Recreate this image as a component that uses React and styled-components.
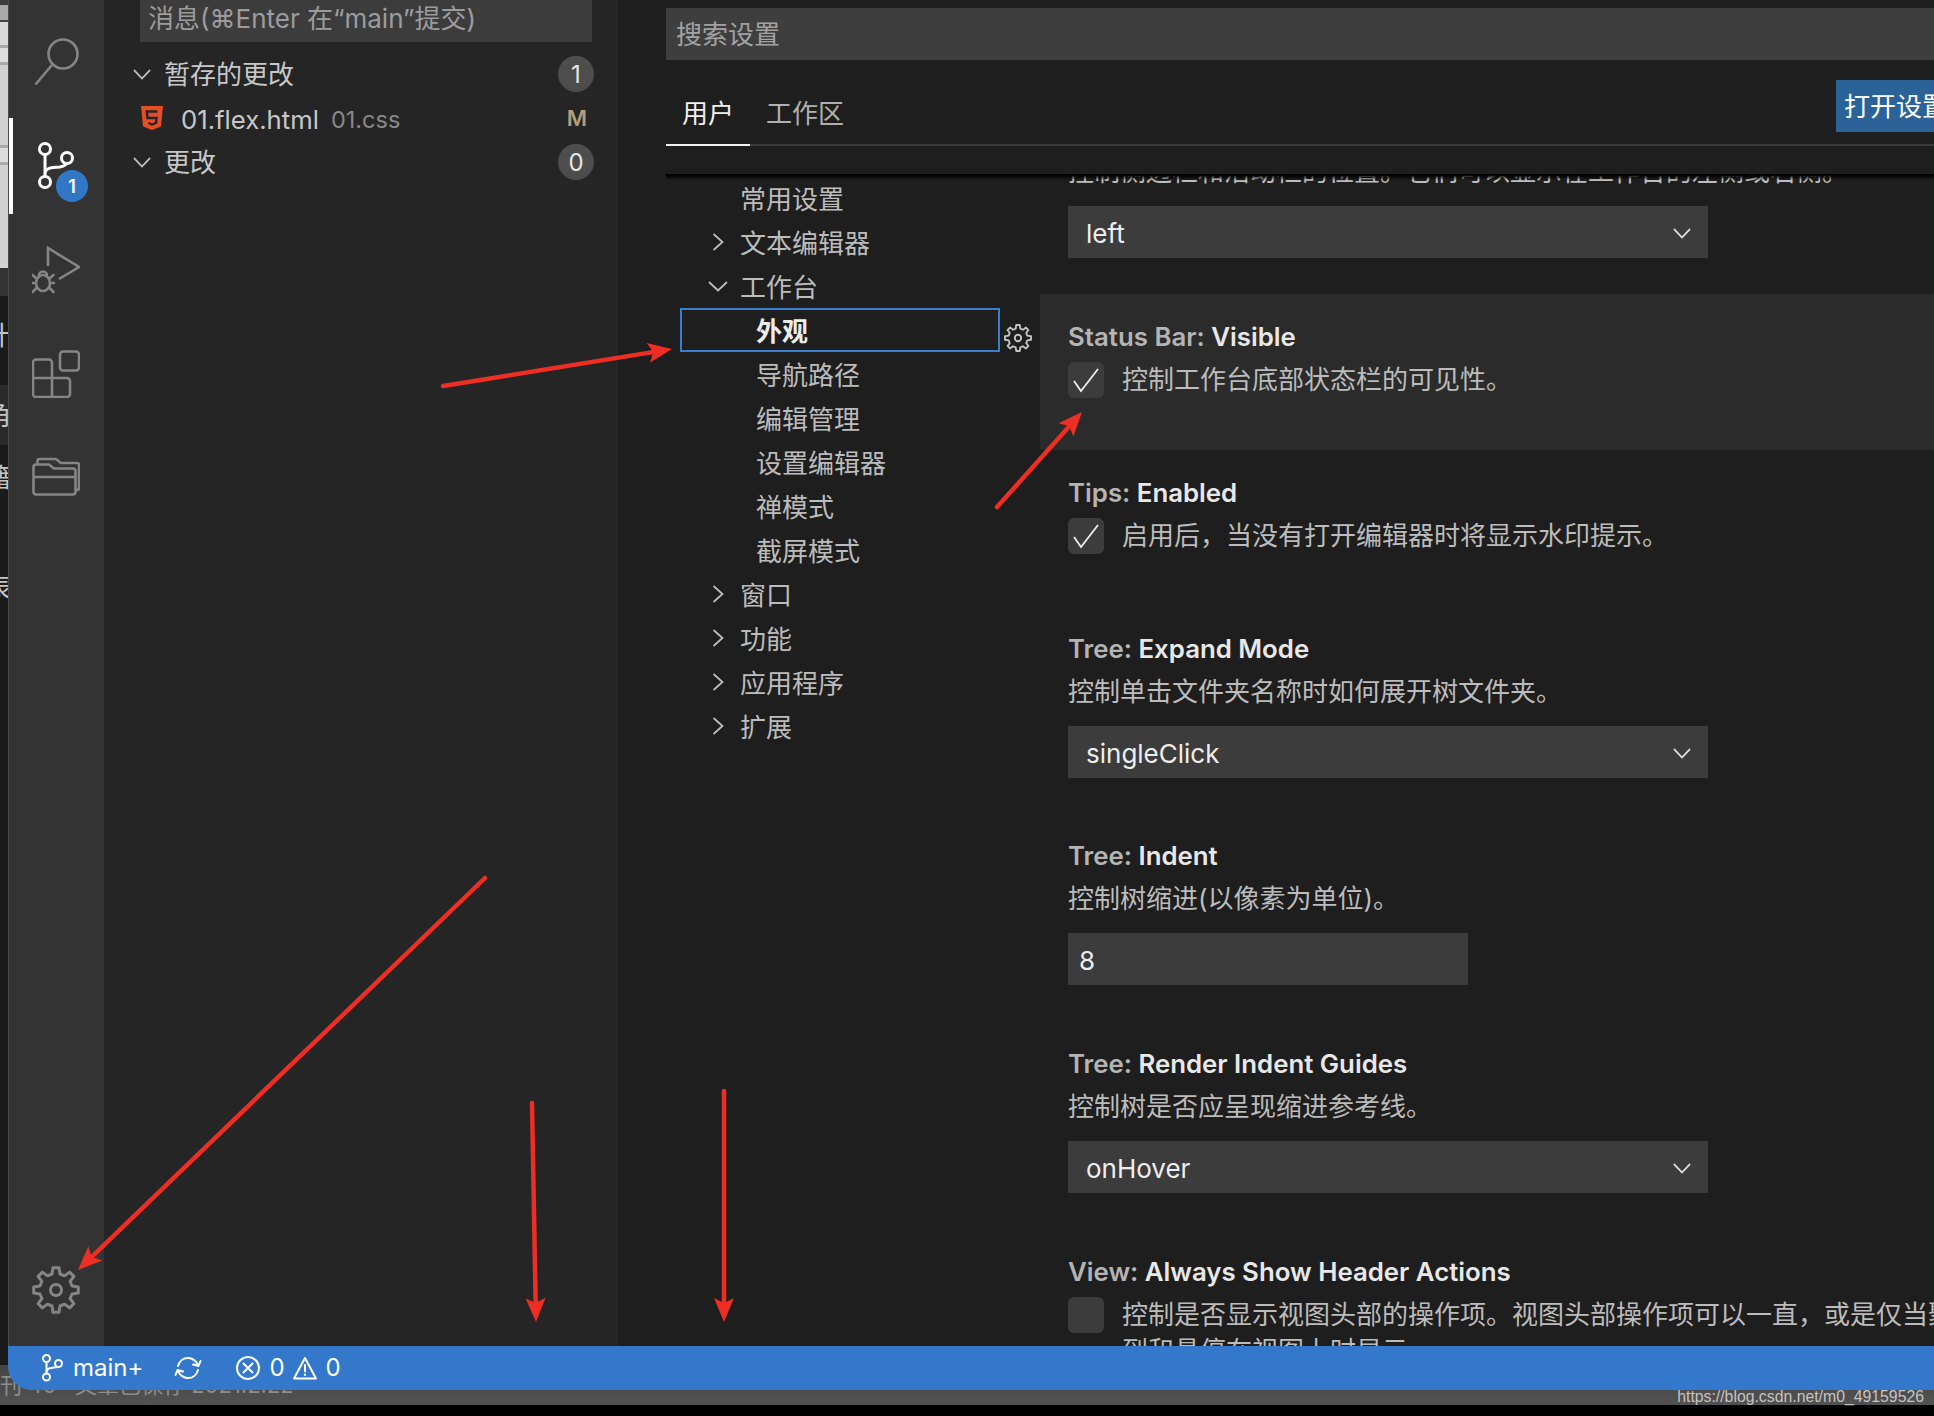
import React from "react";
import styled, { createGlobalStyle } from "styled-components";

const Global = createGlobalStyle`
  html, body { margin: 0; padding: 0; width: 1934px; height: 1416px; overflow: hidden; background: #000; }
  body { font-family: Inter, "Noto Sans CJK SC", sans-serif; }
  #root { width: 1934px; height: 1416px; }
`;

const Page = styled.div`
  position: relative; width: 1934px; height: 1416px; overflow: hidden;
  display: flex; flex-direction: column; background: #000;
`;
const Workspace = styled.div`display: flex; height: 1346px; flex: none;`;

const Strip = styled.div`width: 8px; flex: none; display: flex; flex-direction: column; overflow: hidden; border-right: 1px solid #4c4c4c; box-sizing: content-box;`;
const StripBand = styled.div`
  flex: none; height: ${p => p.$h}px; background: ${p => p.$bg}; position: relative; overflow: hidden;
`;
const StripGlyph = styled.span`
  position: absolute; left: -15px; top: ${p => p.$top}px; font-size: 26px; line-height: 26px; color: #c4c4c4;
`;

const ActivityBar = styled.nav`
  width: 95px; flex: none; background: #333; display: flex; flex-direction: column;
  padding: 10px 0 4px; box-sizing: border-box;
`;
const ActivityItem = styled.div`
  position: relative; height: 104px; flex: none; display: flex; align-items: center; justify-content: center;
  padding-right: 2px;
  ${p => p.$bottom && "margin-top: auto;"}
  ${p => p.$active && `&::before { content: ""; position: absolute; left: 0; top: 4px; bottom: 4px; width: 4px; background: #fff; }`}
`;
const ActivityBadge = styled.span`
  position: absolute; left: 47px; top: 56px; width: 32px; height: 32px; border-radius: 50%;
  background: #3277c6; color: #fff; font-size: 18px; font-weight: 600;
  display: flex; align-items: center; justify-content: center;
`;

const Sidebar = styled.aside`
  width: 514px; flex: none; background: #252525; padding: 0 24px 0 36px; box-sizing: border-box;
  color: #c8c8c8; font-size: 26px;
`;
const CommitInput = styled.div`
  height: 42px; width: 452px; background: #3c3c3c; color: #9c9c9c; padding-left: 8px; box-sizing: border-box;
  line-height: 38px; margin-bottom: 10px; white-space: nowrap; overflow: hidden; margin-right: -2px;
`;
const GroupRow = styled.div`
  height: 44px; display: flex; align-items: center; margin-left: -7px;
`;
const GroupChevron = styled.span`width: 18px; display: flex; margin-right: 13px;`;
const RowText = styled.span`flex: 1; white-space: nowrap; padding-bottom: 3px;`;
const CountBadge = styled.span`
  min-width: 36px; height: 36px; border-radius: 18px; background: #4d4d4d; color: #e6e6e6; font-size: 24px;
  display: flex; align-items: center; justify-content: center; box-sizing: border-box;
`;
const FileRow = styled.div`height: 44px; display: flex; align-items: center; padding-left: 1px;`;
const FileName = styled.span`font-size: 25.7px; color: #c8c8c8; margin-left: 18px; padding-top: 2px;`;
const FileDir = styled.span`font-size: 23.500px; color: #888; margin-left: 12px; flex: 1; padding-top: 2px;`;
const FileState = styled.span`font-size: 22px; font-weight: 600; color: #b39e7a; margin-right: 7px;`;

const Editor = styled.main`
  flex: 1; min-width: 0; background: #1e1e1e; display: flex; flex-direction: column; padding-left: 48px; overflow: hidden;
`;
const Header = styled.header`
  position: relative; z-index: 2; height: 174px; flex: none; padding-top: 8px; box-sizing: border-box;
  background: #1e1e1e;
  &::after {
    content: ""; position: absolute; left: 0; right: 0; top: 100%; height: 6px;
    background: linear-gradient(#000 20%, rgba(0, 0, 0, 0));
  }
`;
const SearchBox = styled.div`
  height: 52px; background: #3e3e3e; color: #a2a2a2; font-size: 26px; line-height: 54px; padding-left: 10px;
`;
const TabBar = styled.div`
  margin-top: 20px; height: 66px; box-sizing: border-box; border-bottom: 2px solid #3a3a3a;
  display: flex; align-items: flex-start;
`;
const Tab = styled.div`
  height: 66px; box-sizing: border-box; padding: 0 16px; line-height: 67px; font-size: 26px;
  color: ${p => (p.$active ? "#f0f0f0" : "#b0b0b0")};
  border-bottom: 2px solid ${p => (p.$active ? "#f2f2f2" : "transparent")};
`;
const OpenButton = styled.div`
  margin-left: auto; margin-right: -16px; height: 52px; width: 114px; box-sizing: border-box; flex: none; background: #2b6297; color: #fff;
  font-size: 26px; line-height: 54px; padding-left: 8px; white-space: nowrap; overflow: hidden;
`;

const Body = styled.div`flex: 1; display: flex; min-height: 0;`;
const Tree = styled.div`width: 374px; flex: none; padding-top: 2px; box-sizing: border-box;`;
const TreeRow = styled.div`
  position: relative; margin-left: 14px; width: 320px; height: 44px; box-sizing: border-box;
  border: 2px solid ${p => (p.$selected ? "#3a7dcc" : "transparent")};
  display: flex; align-items: center; padding-left: ${p => (p.$sub ? 74 : 24)}px; padding-bottom: 2px;
  font-size: 26px; font-weight: ${p => (p.$selected ? 700 : 400)};
  color: ${p => (p.$selected ? "#ededed" : "#bcbcbc")}; white-space: nowrap;
`;
const TreeChevron = styled.span`width: 24px; margin-right: 10px; display: flex; justify-content: center; flex: none; padding-top: 2px;`;
const RowGear = styled.span`position: absolute; right: -34px; top: 14px; display: flex;`;

const Settings = styled.div`flex: 1; min-width: 0; overflow: hidden; height: 1172px;`;
const SettingsScroll = styled.div`margin-top: -88px;`;
const Setting = styled.section`
  height: ${p => p.$h}px; box-sizing: border-box; padding: 25px 0 0 28px; overflow: hidden; flex: none;
  background: ${p => (p.$focus ? "#2b2b2b" : "transparent")};
`;
const Title = styled.div`font-size: 25.800px; line-height: 36px; font-weight: 600; color: #b4b4b4; white-space: nowrap;`;
const TitleKey = styled.span`color: #e8e8e8;`;
const Description = styled.div`
  font-size: 26px; line-height: 36px; color: #bcbcbc; margin-top: 7px; max-width: 860px;
`;
const CheckRow = styled.div`display: flex; gap: 18px; margin-top: 7px;`;
const CheckBox = styled.div`
  width: 36px; height: 36px; border-radius: 6px; background: #3c3c3c; flex: none;
  display: flex; align-items: center; justify-content: center;
`;
const CheckText = styled(Description)`margin-top: 0; width: 860px; flex: none;`;
const Field = styled.div`
  margin-top: 16px; width: ${p => p.$w}px; height: 52px; background: #3c3c3c; color: #eee; font-size: 26px;
  display: flex; align-items: center; justify-content: space-between; padding: 2px 17px 0 ${p => p.$pl}px; box-sizing: border-box;
`;

const BottomZone = styled.div`
  position: relative; height: 59px; flex: none;
  background: linear-gradient(#1a1a1a 19px, #444 19px, #525252 100%);
`;
const StatusBar = styled.footer`
  position: relative; z-index: 1; margin-left: 8px; height: 44px; background: #3478cb; color: #fff;
  border-bottom-left-radius: 24px; display: flex; align-items: center; padding-left: 33px;
  font-size: 24px;
`;
const StatusText = styled.span`margin-left: ${p => p.$ml || 0}px; line-height: 1;`;
const StatusIcon = styled.span`display: flex; margin-left: ${p => p.$ml || 0}px;`;
const BehindText = styled.div`
  position: absolute; left: 0; top: 24px; font-size: 22px; line-height: 30px; color: #8c8c8c; white-space: nowrap;
`;
const Watermark = styled.div`
  position: absolute; right: 10px; bottom: 0; height: 16px; line-height: 16px;
  font-family: "Liberation Sans", sans-serif; font-size: 15.800px; color: #c4c4c4; white-space: nowrap;
`;
const Annotation = styled.svg`position: absolute; left: 0; top: 0; z-index: 5; pointer-events: none;`;

const gearPath = () => {
  const pts = [];
  const n = 8, rO = 22.500, rI = 16.500;
  for (let i = 0; i < n; i++) {
    const a = (i / n) * Math.PI * 2 - Math.PI / 2;
    const s = Math.PI / n;
    [[-0.62, rI], [-0.34, rO], [0.34, rO], [0.62, rI]].forEach(([k, r]) => {
      const t = a + k * s;
      pts.push(`${(24 + r * Math.cos(t)).toFixed(2)} ${(24 + r * Math.sin(t)).toFixed(2)}`);
    });
  }
  return `M${pts.join("L")}Z`;
};

const Gear = ({ size = 48, color = "#858585", sw = 3 }) => (
  <svg width={size} height={size} viewBox="0 0 48 48" fill="none" stroke={color} strokeWidth={sw} strokeLinejoin="round">
    <path d={gearPath()} />
    <circle cx="24" cy="24" r="5.500" />
  </svg>
);

const Icon = ({ children, stroke = "#858585", sw = 2.6, w = 48, h = 48 }) => (
  <svg width={w} height={h} viewBox={`0 0 ${w} ${h}`} fill="none" stroke={stroke} strokeWidth={sw} strokeLinecap="round" strokeLinejoin="round">
    {children}
  </svg>
);

const SearchIcon = () => (
  <Icon><circle cx="31" cy="16" r="14.500" /><path d="M20 27 3.500 46.500" strokeLinecap="butt" /></Icon>
);
const ScmIcon = () => (
  <Icon stroke="#fff" sw={3}>
    <circle cx="13" cy="7" r="5.500" /><circle cx="35" cy="16" r="5.500" /><circle cx="13" cy="40" r="5.500" />
    <path d="M13 13V34M13 31Q14 26 21 25.500L28 25Q33 24 34.500 21.500" />
  </Icon>
);
const DebugIcon = () => (
  <Icon>
    <path d="M16 20V2L47 21 27 33" strokeLinecap="butt" strokeLinejoin="miter" />
    <ellipse cx="11" cy="37" rx="7" ry="8" />
    <path d="M7 29.500a4 4 0 0 1 8 0M0.500 29l4 3.500M21.500 29l-4 3.500M0 37h4M22 37h-4M0.500 46l4-4M21.500 46l-4-4" />
  </Icon>
);
const ExtensionsIcon = () => (
  <Icon>
    <rect x="28" y="1.500" width="19" height="19" rx="3" />
    <path d="M1 12.500a3 3 0 0 1 3-3h13a3 3 0 0 1 3 3V28h15a3 3 0 0 1 3 3v13a3 3 0 0 1-3 3H4a3 3 0 0 1-3-3ZM1 28H20M20 28V47" />
  </Icon>
);
const ExplorerIcon = () => (
  <Icon>
    <path d="M1.500 13a2.500 2.500 0 0 1 2.500-2.500H17l5 4H41a2.500 2.500 0 0 1 2.500 2.500V38a2.500 2.500 0 0 1-2.500 2.500H4A2.500 2.500 0 0 1 1.500 38ZM1.500 23H43.500" />
    <path d="M5.500 9V7a2 2 0 0 1 2-2H24l5 4H45a2 2 0 0 1 2 2V34a2 2 0 0 1-2 2H44" />
  </Icon>
);

const ChevronRight = () => (
  <svg width="12" height="18" viewBox="0 0 12 18" fill="none" stroke="#bdbdbd" strokeWidth="1.800"><path d="M1.500 1 10.500 9 1.500 17" /></svg>
);
const ChevronDown = ({ color = "#bdbdbd", w = 20 }) => (
  <svg width={w} height="11" viewBox="0 0 20 11" preserveAspectRatio="none" fill="none" stroke={color} strokeWidth="1.800"><path d="M1 1 10 9.500 19 1" /></svg>
);
const Tick = () => (
  <svg width="36" height="36" viewBox="0 0 36 36" fill="none" stroke="#eee" strokeWidth="1.800"><path d="M6 19 13 29 30 7" /></svg>
);
const Html5Icon = () => (
  <svg width="22" height="24" viewBox="0 0 22 24">
    <path d="M0 0H22L20 20.500 11 24 2 20.500Z" fill="#e44d26" />
    <path d="M16.500 5.500H5.800L6.500 12H15.500L15 17 11 18.500 7.500 17" fill="none" stroke="#252525" strokeWidth="2.400" />
  </svg>
);
const BranchIcon = () => (
  <Icon stroke="#fff" sw={2} w={22} h={28}>
    <circle cx="5.500" cy="4.500" r="3.500" /><circle cx="17.500" cy="9.500" r="3.500" /><circle cx="5.500" cy="23" r="3.500" />
    <path d="M5.500 8V19.500M5.500 18Q6 14.500 10 14L13 13.500Q16 13 17 13" />
  </Icon>
);
const SyncIcon = () => (
  <Icon stroke="#fff" sw={2} w={28} h={26}>
    <path d="M4 11C5.500 5.500 10 2.500 15 3 19 3.500 22 6 24 10M24 15C22.500 20.500 18 23.500 13 23 9 22.500 6 20 4 16" />
    <path d="M19 9.500 24.500 11 26.500 6M9 16.500 3.500 15 1.500 20" />
  </Icon>
);
const ErrorIcon = () => (
  <Icon stroke="#fff" sw={2} w={24} h={24}>
    <circle cx="12" cy="12" r="11" /><path d="M7.500 7.500 16.500 16.500M16.500 7.500 7.500 16.500" />
  </Icon>
);
const WarningIcon = () => (
  <Icon stroke="#fff" sw={2} w={24} h={24}>
    <path d="M12 2 23 22.500H1Z" /><path d="M12 9V15.500M12 18.500V19" />
  </Icon>
);

const arrows = [
  [443, 386, 672, 349],
  [997, 507, 1082, 412],
  [485, 878, 78, 1270],
  [532, 1103, 536, 1322],
  [724, 1091, 724, 1322],
];
const head = (x1, y1, x2, y2) => {
  const d = Math.hypot(x2 - x1, y2 - y1);
  const ux = (x2 - x1) / d, uy = (y2 - y1) / d;
  const L = 24, H = 10, N = 19;
  const bx = x2 - ux * L, by = y2 - uy * L;
  const nx = x2 - ux * N, ny = y2 - uy * N;
  return `${x2},${y2} ${bx - uy * H},${by + ux * H} ${nx},${ny} ${bx + uy * H},${by - ux * H}`;
};
const Arrows = () => (
  <Annotation width="1934" height="1416" viewBox="0 0 1934 1416">
    {arrows.map(([a, b, c, d], i) => {
      const len = Math.hypot(c - a, d - b);
      const ex = c - ((c - a) / len) * 18, ey = d - ((d - b) / len) * 18;
      return (
        <g key={i}>
          <line x1={a} y1={b} x2={ex} y2={ey} stroke="#ee2e24" strokeWidth="4.500" strokeLinecap="round" />
          <polygon points={head(a, b, c, d)} fill="#ee2e24" />
        </g>
      );
    })}
  </Annotation>
);

const stripBands = [
  [5, "#3c3c3c"], [15, "#a8a8a8"], [2, "#444"], [23, "#d9d9d9"], [3, "#aaa"], [14, "#dedede"], [3, "#aaa"],
  [80, "#d2d2d2"], [3, "#aaa"], [14, "#dcdcdc"], [3, "#aaa"], [103, "#d2d2d2"], [28, "#333"],
  [89, "#1a1a1a", "什", 27], [60, "#2a2a2a", "角", 18], [901, "#1a1a1a", "籍", 20],
];

const treeTop = [
  { label: "常用设置" },
  { label: "文本编辑器", chevron: "right" },
  { label: "工作台", chevron: "down" },
  { label: "外观", sub: true, selected: true },
  { label: "导航路径", sub: true },
  { label: "编辑管理", sub: true },
  { label: "设置编辑器", sub: true },
  { label: "禅模式", sub: true },
  { label: "截屏模式", sub: true },
  { label: "窗口", chevron: "right" },
  { label: "功能", chevron: "right" },
  { label: "应用程序", chevron: "right" },
  { label: "扩展", chevron: "right" },
];

const settings = [
  { h: 208, cat: "Side Bar: ", key: "Location", desc: "控制侧边栏和活动栏的位置。它们可以显示在工作台的左侧或右侧。", select: "left" },
  { h: 156, focus: true, cat: "Status Bar: ", key: "Visible", desc: "控制工作台底部状态栏的可见性。", check: true },
  { h: 156, cat: "Tips: ", key: "Enabled", desc: "启用后，当没有打开编辑器时将显示水印提示。", check: true },
  { h: 207, cat: "Tree: ", key: "Expand Mode", desc: "控制单击文件夹名称时如何展开树文件夹。", select: "singleClick" },
  { h: 208, cat: "Tree: ", key: "Indent", desc: "控制树缩进(以像素为单位)。", input: "8" },
  { h: 208, cat: "Tree: ", key: "Render Indent Guides", desc: "控制树是否应呈现缩进参考线。", select: "onHover" },
  { h: 208, cat: "View: ", key: "Always Show Header Actions", desc: "控制是否显示视图头部的操作项。视图头部操作项可以一直，或是仅当聚焦到和悬停在视图上时显示。", unchecked: true },
];

export default function App() {
  return (
    <Page>
      <Global />
      <Workspace>
        <Strip>
          {stripBands.map(([h, bg, glyph, top], i) => (
            <StripBand key={i} $h={h} $bg={bg}>
              {glyph && <StripGlyph $top={top}>{glyph}</StripGlyph>}
              {h === 901 && <StripGlyph $top={130}>表</StripGlyph>}
            </StripBand>
          ))}
        </Strip>
        <ActivityBar>
          <ActivityItem><SearchIcon /></ActivityItem>
          <ActivityItem $active><ScmIcon /><ActivityBadge>1</ActivityBadge></ActivityItem>
          <ActivityItem><DebugIcon /></ActivityItem>
          <ActivityItem><ExtensionsIcon /></ActivityItem>
          <ActivityItem><ExplorerIcon /></ActivityItem>
          <ActivityItem $bottom><Gear /></ActivityItem>
        </ActivityBar>
        <Sidebar>
          <CommitInput>消息(⌘Enter 在“main”提交)</CommitInput>
          <GroupRow>
            <GroupChevron><ChevronDown w={18} /></GroupChevron>
            <RowText>暂存的更改</RowText>
            <CountBadge>1</CountBadge>
          </GroupRow>
          <FileRow>
            <Html5Icon />
            <FileName>01.flex.html</FileName>
            <FileDir>01.css</FileDir>
            <FileState>M</FileState>
          </FileRow>
          <GroupRow>
            <GroupChevron><ChevronDown w={18} /></GroupChevron>
            <RowText>更改</RowText>
            <CountBadge>0</CountBadge>
          </GroupRow>
        </Sidebar>
        <Editor>
          <Header>
            <SearchBox>搜索设置</SearchBox>
            <TabBar>
              <Tab $active>用户</Tab>
              <Tab>工作区</Tab>
              <OpenButton>打开设置</OpenButton>
            </TabBar>
          </Header>
          <Body>
            <Tree>
              {treeTop.map(t => (
                <TreeRow key={t.label} $sub={t.sub} $selected={t.selected}>
                  {!t.sub && (
                    <TreeChevron>
                      {t.chevron === "right" && <ChevronRight />}
                      {t.chevron === "down" && <ChevronDown />}
                    </TreeChevron>
                  )}
                  {t.label}
                  {t.selected && <RowGear><Gear size={28} color="#c4c4c4" sw={3.200} /></RowGear>}
                </TreeRow>
              ))}
            </Tree>
            <Settings>
              <SettingsScroll>
                {settings.map(s => (
                  <Setting key={s.key} $h={s.h} $focus={s.focus}>
                    <Title>{s.cat}<TitleKey>{s.key}</TitleKey></Title>
                    {s.check || s.unchecked ? (
                      <CheckRow>
                        <CheckBox>{s.check && <Tick />}</CheckBox>
                        <CheckText>{s.desc}</CheckText>
                      </CheckRow>
                    ) : (
                      <Description>{s.desc}</Description>
                    )}
                    {s.select && (
                      <Field $w={640} $pl={18}>{s.select}<ChevronDown color="#dcdcdc" w={18} /></Field>
                    )}
                    {s.input && <Field $w={400} $pl={11}>{s.input}</Field>}
                  </Setting>
                ))}
              </SettingsScroll>
            </Settings>
          </Body>
        </Editor>
      </Workspace>
      <BottomZone>
        <BehindText>刊 40 · 文章已保存 2021.2.22</BehindText>
        <StatusBar>
          <BranchIcon />
          <StatusText $ml={10}>main+</StatusText>
          <StatusIcon $ml={31}><SyncIcon /></StatusIcon>
          <StatusIcon $ml={34}><ErrorIcon /></StatusIcon>
          <StatusText $ml={9}>0</StatusText>
          <StatusIcon $ml={8}><WarningIcon /></StatusIcon>
          <StatusText $ml={9}>0</StatusText>
        </StatusBar>
        <Watermark>https://blog.csdn.net/m0_49159526</Watermark>
      </BottomZone>
      <Arrows />
    </Page>
  );
}
